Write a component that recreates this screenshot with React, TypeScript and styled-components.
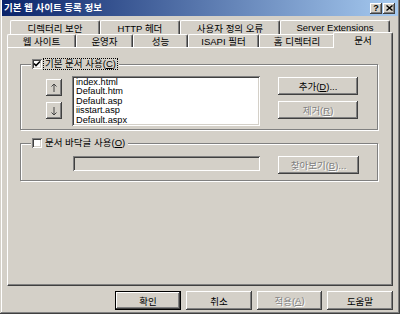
import styled, { createGlobalStyle } from 'styled-components';

const GlobalStyle = createGlobalStyle`
  html, body {
    margin: 0;
    padding: 0;
    background: #d4d0c8;
  }
  body {
    font-family: 'Liberation Sans', 'Noto Sans CJK KR', sans-serif;
    font-size: 9.5px;
    color: #000;
  }
`;

const _backTabs = [
  { label: '디렉터리 보안', w: 90 },
  { label: 'HTTP 헤더', w: 80 },
  { label: '사용자 정의 오류', w: 100 },
  { label: 'Server Extensions', w: 110 },
];

const _frontTabs = [
  { label: '웹 사이트', w: 69 },
  { label: '운영자', w: 57 },
  { label: '성능', w: 55 },
  { label: 'ISAPI 필터', w: 71 },
  { label: '홈 디렉터리', w: 76 },
];

const _docs = ['index.html', 'Default.htm', 'Default.asp', 'iisstart.asp', 'Default.aspx'];

const CheckMark = () => (
  <svg width="8" height="8" viewBox="0 0 8 8">
    <path d="M1 3.5 L3 5.5 L7 1.5" stroke="#000" strokeWidth="1.6" fill="none" />
  </svg>
);

const ArrowUp = () => (
  <svg width="8" height="10" viewBox="0 0 8 10">
    <path d="M4 1 V9 M1.5 3.5 L4 1 L6.5 3.5" stroke="#444" strokeWidth="1" fill="none" />
  </svg>
);

const ArrowDown = () => (
  <svg width="8" height="10" viewBox="0 0 8 10">
    <path d="M4 1 V9 M1.5 6.5 L4 9 L6.5 6.5" stroke="#444" strokeWidth="1" fill="none" />
  </svg>
);

const CloseGlyph = () => (
  <svg width="7" height="6" viewBox="0 0 7 6">
    <path d="M0.5 0.5 L6.5 5.5 M6.5 0.5 L0.5 5.5" stroke="#000" strokeWidth="1.4" />
  </svg>
);

export default function App() {
  return (
    <Window>
      <GlobalStyle />
      <TitleBar>
        <Title>기본 웹 사이트 등록 정보</Title>
        <TitleButtons>
          <TitleButton>?</TitleButton>
          <TitleButton>
            <CloseGlyph />
          </TitleButton>
        </TitleButtons>
      </TitleBar>

      <Content>
        <TabRow $indent={3} $h={14}>
          {_backTabs.map((t) => (
            <Tab key={t.label} $w={t.w}>
              {t.label}
            </Tab>
          ))}
        </TabRow>
        <TabRow $indent={0} $h={13}>
          {_frontTabs.map((t) => (
            <Tab key={t.label} $w={t.w}>
              {t.label}
            </Tab>
          ))}
          <Tab $w={60} $active>
            문서
          </Tab>
        </TabRow>

        <Panel>
          <Group>
            <Legend>
              <CheckBox>
                <CheckMark />
              </CheckBox>
              <LegendLabel $focus>
                기본 문서 사용(<u>C</u>)
              </LegendLabel>
            </Legend>
            <GroupBody $top={7} $left={25} $bottom={3}>
              <ArrowColumn>
                <Button $w={16} $h={17}>
                  <ArrowUp />
                </Button>
                <Button $w={16} $h={17}>
                  <ArrowDown />
                </Button>
              </ArrowColumn>
              <ListBox>
                {_docs.map((d) => (
                  <ListItem key={d}>{d}</ListItem>
                ))}
              </ListBox>
              <ButtonColumn>
                <Button $w={80} $h={18}>
                  추가(<u>D</u>)...
                </Button>
                <Button $w={80} $h={18} disabled>
                  제거(<u>R</u>)
                </Button>
              </ButtonColumn>
            </GroupBody>
          </Group>

          <Group $gap={8}>
            <Legend>
              <CheckBox />
              <LegendLabel>
                문서 바닥글 사용(<u>O</u>)
              </LegendLabel>
            </Legend>
            <GroupBody $top={8} $left={52} $bottom={6}>
              <TextField />
              <BrowseSlot>
                <Button $w={81} $h={18} disabled>
                  찾아보기(<u>B</u>)...
                </Button>
              </BrowseSlot>
            </GroupBody>
          </Group>
        </Panel>

        <ButtonBar>
          <Button $w={66} $h={19} $default>
            확인
          </Button>
          <Button $w={66} $h={19}>
            취소
          </Button>
          <Button $w={65} $h={19} disabled>
            적용(<u>A</u>)
          </Button>
          <Button $w={66} $h={19}>
            도움말
          </Button>
        </ButtonBar>
      </Content>
    </Window>
  );
}

const Window = styled.div`
  width: 400px;
  height: 314px;
  box-sizing: border-box;
  display: flex;
  flex-direction: column;
  padding: 0 2px 2px 2px;
  background: #d4d0c8;
  box-shadow: inset -1px -1px #404040, inset 1px 0 #d4d0c8, inset -2px -2px #808080, inset 2px 0 #fff;
`;

const TitleBar = styled.div`
  height: 16px;
  display: flex;
  align-items: center;
  padding: 0 3px 0 2px;
  background: linear-gradient(to right, #0a246a, #a6caf0);
  color: #fff;
`;

const Title = styled.div`
  flex: 1;
  font-weight: bold;
  font-size: 9.5px;
  line-height: 16px;
`;

const TitleButtons = styled.div`
  display: flex;
  gap: 1px;
`;

const TitleButton = styled.div`
  width: 12px;
  height: 11px;
  box-sizing: border-box;
  display: flex;
  align-items: center;
  justify-content: center;
  background: #d4d0c8;
  color: #000;
  font-weight: bold;
  font-size: 9px;
  box-shadow: inset -1px -1px #404040, inset 1px 1px #fff, inset -2px -2px #808080;
`;

const Content = styled.div`
  flex: 1;
  display: flex;
  flex-direction: column;
  padding: 4px 5px 0 5px;
`;

const TabRow = styled.div<{ $indent: number; $h: number }>`
  display: flex;
  align-items: stretch;
  height: ${(p) => p.$h}px;
  padding-left: ${(p) => p.$indent}px;
`;

const Tab = styled.div<{ $w: number; $active?: boolean }>`
  width: ${(p) => p.$w}px;
  box-sizing: border-box;
  display: flex;
  align-items: center;
  justify-content: center;
  white-space: nowrap;
  background: #d4d0c8;
  border-top: 1px solid #fff;
  border-left: 1px solid #fff;
  border-right: 1px solid #404040;
  border-radius: 2px 2px 0 0;
  box-shadow: inset -1px 0 #808080;
  ${(p) =>
    p.$active &&
    `
    position: relative;
    z-index: 1;
    align-self: flex-end;
    height: 16px;
    margin-left: -2px;
    margin-bottom: -1px;
    padding-bottom: 2px;
  `}
`;

const Panel = styled.div`
  height: 239px;
  box-sizing: border-box;
  display: flex;
  flex-direction: column;
  padding: 11px 14px 0 12px;
  border-top: 1px solid #fff;
  border-left: 1px solid #fff;
  border-right: 1px solid #404040;
  border-bottom: 1px solid #404040;
  box-shadow: inset -1px -1px #808080;
`;

const Group = styled.fieldset<{ $gap?: number }>`
  margin: ${(p) => p.$gap ?? 0}px 0 0 0;
  padding: 0;
  min-width: 0;
  border: 1px solid #808080;
  box-shadow: 1px 1px 0 #fff, inset 1px 1px 0 #fff;
`;

const Legend = styled.legend`
  margin-left: 10px;
  padding: 0 2px 0 1px;
  height: 10px;
  display: flex;
  align-items: center;
  gap: 2px;
  background: #d4d0c8;
`;

const CheckBox = styled.span`
  width: 10px;
  height: 10px;
  box-sizing: border-box;
  display: flex;
  align-items: center;
  justify-content: center;
  background: #fff;
  box-shadow: inset 1px 1px #808080, inset -1px -1px #fff, inset 2px 2px #404040, inset -2px -2px #d4d0c8;
`;

const LegendLabel = styled.span<{ $focus?: boolean }>`
  line-height: 10px;
  padding: 0 1px;
  white-space: nowrap;
  outline: ${(p) => (p.$focus ? '1px dotted #000' : 'none')};
`;

const GroupBody = styled.div<{ $top: number; $left: number; $bottom: number }>`
  display: flex;
  align-items: flex-start;
  padding: ${(p) => `${p.$top}px 0 ${p.$bottom}px ${p.$left}px`};
`;

const ArrowColumn = styled.div`
  display: flex;
  flex-direction: column;
  gap: 6px;
  margin-top: 3px;
  margin-right: 10px;
`;

const ListBox = styled.div`
  width: 188px;
  height: 50px;
  box-sizing: border-box;
  padding: 2px 4px 0 4px;
  overflow: hidden;
  background: #fff;
  box-shadow: inset 1px 1px #808080, inset -1px -1px #fff, inset 2px 2px #404040, inset -2px -2px #d4d0c8;
`;

const ListItem = styled.div`
  height: 9.4px;
  line-height: 9.4px;
  font-size: 9.2px;
  white-space: nowrap;
`;

const ButtonColumn = styled.div`
  display: flex;
  flex-direction: column;
  gap: 6px;
  margin-top: 1px;
  margin-left: 18px;
`;

const TextField = styled.div`
  width: 187px;
  height: 15px;
  box-sizing: border-box;
  background: #d4d0c8;
  box-shadow: inset 1px 1px #808080, inset -1px -1px #fff, inset 2px 2px #404040, inset -2px -2px #d4d0c8;
`;

const BrowseSlot = styled.div`
  margin-left: 18px;
`;

const Button = styled.button<{ $w: number; $h: number; $default?: boolean }>`
  width: ${(p) => p.$w}px;
  height: ${(p) => p.$h}px;
  box-sizing: border-box;
  display: flex;
  align-items: center;
  justify-content: center;
  padding: 0;
  margin: 0;
  font-family: inherit;
  font-size: 9.5px;
  white-space: nowrap;
  color: #000;
  background: #d4d0c8;
  border: ${(p) => (p.$default ? '1px solid #000' : 'none')};
  box-shadow: inset -1px -1px #404040, inset 1px 1px #fff, inset -2px -2px #808080;

  &:disabled {
    color: #808080;
    text-shadow: 1px 1px 0 #fff;
  }
`;

const ButtonBar = styled.div`
  display: flex;
  justify-content: flex-end;
  gap: 5px;
  margin-top: 5px;
`;
